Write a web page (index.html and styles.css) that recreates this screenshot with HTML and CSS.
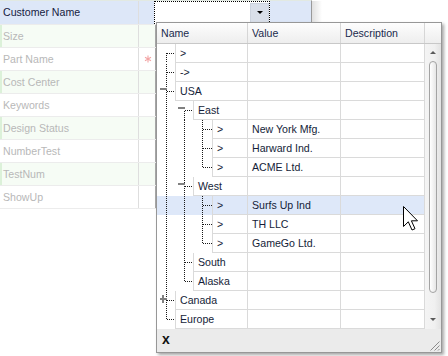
FILE: index.html
```html
<!DOCTYPE html>
<html>
<head>
<meta charset="utf-8">
<link rel="stylesheet" href="styles.css">
</head>
<body>
<div class="pgrid">
  <div class="prow first active">
    <div class="plabel">Customer Name</div>
    <div class="pmark"></div>
    <div class="pvalue"><div class="editor"><span class="ebtn"><span class="earrow"></span></span></div></div>
  </div>
  <div class="prow alt"><div class="plabel">Size</div><div class="pmark"></div><div class="pvalue"></div></div>
  <div class="prow"><div class="plabel">Part Name</div><div class="pmark"><svg class="star" width="8" height="8" viewBox="0 0 8 8"><path d="M4 0.5V7.5M1 2.2L7 5.8M1 5.8L7 2.2"/></svg></div><div class="pvalue"></div></div>
  <div class="prow alt"><div class="plabel">Cost Center</div><div class="pmark"></div><div class="pvalue"></div></div>
  <div class="prow"><div class="plabel">Keywords</div><div class="pmark"></div><div class="pvalue"></div></div>
  <div class="prow alt"><div class="plabel">Design Status</div><div class="pmark"></div><div class="pvalue"></div></div>
  <div class="prow"><div class="plabel">NumberTest</div><div class="pmark"></div><div class="pvalue"></div></div>
  <div class="prow alt"><div class="plabel">TestNum</div><div class="pmark"></div><div class="pvalue"></div></div>
  <div class="prow"><div class="plabel">ShowUp</div><div class="pmark"></div><div class="pvalue"></div></div>
</div>

<div class="popup">
  <div class="ghead">
    <div class="hc c1">Name</div>
    <div class="hc c2">Value</div>
    <div class="hc c3">Description</div>
    <div class="hc c4"></div>
  </div>
  <div class="gbody">
    <div class="rows">
      <div class="trow"><div class="ncol"><svg class="tree" width="18" height="19"><line class="d v" x1="9.5" y1="9" x2="9.5" y2="19"/><line class="d" x1="10" y1="9.5" x2="18" y2="9.5"/></svg><div class="node">&gt;</div></div><div class="vcell"></div><div class="dcell"></div></div>
      <div class="trow"><div class="ncol"><svg class="tree" width="18" height="19"><line class="d v" x1="9.5" y1="0" x2="9.5" y2="19"/><line class="d" x1="10" y1="9.5" x2="18" y2="9.5"/></svg><div class="node">-&gt;</div></div><div class="vcell"></div><div class="dcell"></div></div>
      <div class="trow"><div class="ncol"><svg class="tree" width="18" height="19"><line class="d v" x1="9.5" y1="0" x2="9.5" y2="19"/><line class="d" x1="10" y1="9.5" x2="18" y2="9.5"/><rect class="g" x="3" y="6" width="7" height="2"/></svg><div class="node">USA</div></div><div class="vcell"></div><div class="dcell"></div></div>
      <div class="trow"><div class="ncol"><svg class="tree" width="36" height="19"><line class="d v" x1="9.5" y1="0" x2="9.5" y2="19"/><line class="d v" x1="27.5" y1="9" x2="27.5" y2="19"/><line class="d" x1="28" y1="9.5" x2="36" y2="9.5"/><rect class="g" x="21" y="6" width="7" height="2"/></svg><div class="node">East</div></div><div class="vcell"></div><div class="dcell"></div></div>
      <div class="trow"><div class="ncol"><svg class="tree" width="55" height="19"><line class="d v" x1="9.5" y1="0" x2="9.5" y2="19"/><line class="d v" x1="27.5" y1="0" x2="27.5" y2="19"/><line class="d v" x1="45.5" y1="0" x2="45.5" y2="19"/><line class="d" x1="46" y1="9.5" x2="55" y2="9.5"/></svg><div class="node">&gt;</div></div><div class="vcell">New York Mfg.</div><div class="dcell"></div></div>
      <div class="trow"><div class="ncol"><svg class="tree" width="55" height="19"><line class="d v" x1="9.5" y1="0" x2="9.5" y2="19"/><line class="d v" x1="27.5" y1="0" x2="27.5" y2="19"/><line class="d v" x1="45.5" y1="0" x2="45.5" y2="19"/><line class="d" x1="46" y1="9.5" x2="55" y2="9.5"/></svg><div class="node">&gt;</div></div><div class="vcell">Harward Ind.</div><div class="dcell"></div></div>
      <div class="trow"><div class="ncol"><svg class="tree" width="55" height="19"><line class="d v" x1="9.5" y1="0" x2="9.5" y2="19"/><line class="d v" x1="27.5" y1="0" x2="27.5" y2="19"/><line class="d v" x1="45.5" y1="0" x2="45.5" y2="10"/><line class="d" x1="46" y1="9.5" x2="55" y2="9.5"/></svg><div class="node">&gt;</div></div><div class="vcell">ACME Ltd.</div><div class="dcell"></div></div>
      <div class="trow"><div class="ncol"><svg class="tree" width="36" height="19"><line class="d v" x1="9.5" y1="0" x2="9.5" y2="19"/><line class="d v" x1="27.5" y1="0" x2="27.5" y2="19"/><line class="d" x1="28" y1="9.5" x2="36" y2="9.5"/><rect class="g" x="21" y="6" width="7" height="2"/></svg><div class="node">West</div></div><div class="vcell"></div><div class="dcell"></div></div>
      <div class="trow sel"><div class="ncol"><svg class="tree" width="55" height="19"><line class="d v" x1="9.5" y1="0" x2="9.5" y2="19"/><line class="d v" x1="27.5" y1="0" x2="27.5" y2="19"/><line class="d v" x1="45.5" y1="0" x2="45.5" y2="19"/><line class="d" x1="46" y1="9.5" x2="55" y2="9.5"/></svg><div class="node">&gt;</div></div><div class="vcell">Surfs Up Ind</div><div class="dcell"></div></div>
      <div class="trow"><div class="ncol"><svg class="tree" width="55" height="19"><line class="d v" x1="9.5" y1="0" x2="9.5" y2="19"/><line class="d v" x1="27.5" y1="0" x2="27.5" y2="19"/><line class="d v" x1="45.5" y1="0" x2="45.5" y2="19"/><line class="d" x1="46" y1="9.5" x2="55" y2="9.5"/></svg><div class="node">&gt;</div></div><div class="vcell">TH LLC</div><div class="dcell"></div></div>
      <div class="trow"><div class="ncol"><svg class="tree" width="55" height="19"><line class="d v" x1="9.5" y1="0" x2="9.5" y2="19"/><line class="d v" x1="27.5" y1="0" x2="27.5" y2="19"/><line class="d v" x1="45.5" y1="0" x2="45.5" y2="10"/><line class="d" x1="46" y1="9.5" x2="55" y2="9.5"/></svg><div class="node">&gt;</div></div><div class="vcell">GameGo Ltd.</div><div class="dcell"></div></div>
      <div class="trow"><div class="ncol"><svg class="tree" width="36" height="19"><line class="d v" x1="9.5" y1="0" x2="9.5" y2="19"/><line class="d v" x1="27.5" y1="0" x2="27.5" y2="19"/><line class="d" x1="28" y1="9.5" x2="36" y2="9.5"/></svg><div class="node">South</div></div><div class="vcell"></div><div class="dcell"></div></div>
      <div class="trow"><div class="ncol"><svg class="tree" width="36" height="19"><line class="d v" x1="9.5" y1="0" x2="9.5" y2="19"/><line class="d v" x1="27.5" y1="0" x2="27.5" y2="10"/><line class="d" x1="28" y1="9.5" x2="36" y2="9.5"/></svg><div class="node">Alaska</div></div><div class="vcell"></div><div class="dcell"></div></div>
      <div class="trow"><div class="ncol"><svg class="tree" width="18" height="19"><line class="d v" x1="9.5" y1="0" x2="9.5" y2="19"/><line class="d" x1="10" y1="9.5" x2="18" y2="9.5"/><rect class="g" x="3" y="7" width="7" height="2"/><rect class="g" x="5" y="4" width="2" height="8"/></svg><div class="node">Canada</div></div><div class="vcell"></div><div class="dcell"></div></div>
      <div class="trow"><div class="ncol"><svg class="tree" width="18" height="19"><line class="d v" x1="9.5" y1="0" x2="9.5" y2="10"/><line class="d" x1="10" y1="9.5" x2="18" y2="9.5"/></svg><div class="node">Europe</div></div><div class="vcell"></div><div class="dcell"></div></div>
    </div>
    <div class="vscroll">
      <span class="sarrow up"></span>
      <span class="thumb"></span>
      <span class="sarrow down"></span>
    </div>
  </div>
  <div class="gfoot">
    <span class="close">x</span>
    <svg class="grip" width="11" height="11" viewBox="0 0 11 11"><path d="M10.5 1.5L1.5 10.5M10.5 5.5L5.5 10.5M10.5 9L9 10.5"/></svg>
  </div>
</div>

<svg class="cursor" width="17" height="27" viewBox="0 0 17 27"><path d="M0.5 0.5V20.5L5.3 15.8L9 24L12 22.7L8.4 14.8H14.5Z"/></svg>
</body>
</html>
```

FILE: styles.css
```css
html, body {
  margin: 0;
  padding: 0;
}
body {
  width: 448px;
  height: 356px;
  background: #ffffff;
  font-family: "Liberation Sans", Arial, sans-serif;
  font-size: 10.6px;
  color: #141d38;
  position: relative;
  overflow: hidden;
}
* { box-sizing: border-box; }

/* property grid */
.pgrid {
  width: 312px;
  border-top: 1px solid #e2e9e2;
  border-right: 1px solid #9a9a9a;
  position: relative;
}
.pgrid::after {
  content: "";
  position: absolute;
  top: 0;
  right: -11px;
  width: 10px;
  height: 100%;
  background: linear-gradient(90deg, rgba(0,0,0,0.12), rgba(0,0,0,0));
}
.prow {
  display: flex;
  height: 23px;
  border-bottom: 1px solid #ececec;
}
.prow.first { height: 24px; }
.prow.alt {
  background: #f6fcf5;
  box-shadow: inset 2px 0 0 #dcf1d9;
}
.prow.active { background: #dde7f8; }
.plabel {
  width: 139px;
  padding-left: 3px;
  border-right: 1px solid #dedede;
  line-height: 22px;
  color: #b8b8b8;
  white-space: nowrap;
}
.prow.active .plabel { color: #15213f; line-height: 23px; }
.pmark {
  width: 17px;
  border-right: 1px solid #a9a9a9;
  display: flex;
  align-items: center;
  justify-content: center;
}
.star { margin-top: -1px; margin-left: 1px; }
.star path { stroke: #f3a5a5; stroke-width: 1.1; fill: none; }
.pvalue { flex: 1; }
.editor {
  margin-left: -2px;
  width: 116px;
  height: 23px;
  border: 1px dotted #000;
  border-bottom: none;
  background: #fff;
  display: flex;
  justify-content: flex-end;
}
.ebtn {
  width: 19px;
  height: 20px;
  margin-top: 1px;
  background: #d9dfe9;
  border: 1px solid #ccd3de;
  display: flex;
  justify-content: center;
  padding-top: 7px;
}
.earrow {
  width: 0;
  height: 0;
  border-left: 3px solid transparent;
  border-right: 3px solid transparent;
  border-top: 3px solid #000;
}

/* popup */
.popup {
  position: absolute;
  left: 156px;
  top: 22px;
  width: 286px;
  height: 331px;
  border: 1px solid #979797;
  background: #fff;
  box-shadow: 2px 2px 3px rgba(0,0,0,0.35);
  display: flex;
  flex-direction: column;
}
.ghead {
  display: flex;
  height: 21px;
  border-bottom: 1px solid #c8c8c8;
  background: linear-gradient(#fdfdfd, #eeeeee);
  flex: none;
}
.hc {
  line-height: 20px;
  padding-left: 4px;
  border-right: 1px solid #d6d6d6;
  color: #1a2a4c;
  white-space: nowrap;
}
.c1 { width: 91px; }
.c2 { width: 93px; }
.c3 { width: 84px; }
.c4 { width: 16px; border-right: none; }

.gbody {
  display: flex;
  height: 285px;
  flex: none;
}
.rows { width: 268px; }
.trow {
  display: flex;
  height: 19px;
}
.trow.sel { background: #dee8f9; }
.ncol {
  width: 91px;
  display: flex;
}
.tree { flex: none; display: block; }
.tree .d {
  stroke: #1a1a1a;
  stroke-width: 1;
  stroke-dasharray: 1 1;
  shape-rendering: crispEdges;
}
.trow:nth-child(even) .tree .v { stroke-dashoffset: 1; }
.tree .g { fill: #808080; shape-rendering: crispEdges; }
.node {
  flex: 1;
  border-left: 1px solid #dadada;
  border-right: 1px solid #dadada;
  border-bottom: 1px solid #dadada;
  padding-left: 4px;
  line-height: 18px;
  white-space: nowrap;
}
.vcell {
  width: 93px;
  border-right: 1px solid #dadada;
  border-bottom: 1px solid #dadada;
  padding-left: 4px;
  line-height: 18px;
  white-space: nowrap;
}
.dcell {
  width: 84px;
  border-right: 1px solid #dadada;
  border-bottom: 1px solid #dadada;
}

.vscroll {
  width: 16px;
  background: linear-gradient(90deg, #f4f4f4, #f0f0f0 60%, #e2e2e2);
  display: flex;
  flex-direction: column;
  padding-top: 7px;
  padding-left: 4px;
}
.sarrow {
  width: 0;
  height: 0;
  border-left: 3px solid transparent;
  border-right: 3px solid transparent;
  margin-left: 1px;
}
.sarrow.up { border-bottom: 3px solid #5a5a5a; }
.sarrow.down { border-top: 3px solid #5a5a5a; margin-top: 25px; }
.thumb {
  width: 8px;
  height: 232px;
  margin-top: 7px;
  border: 1px solid #a3a3a3;
  border-radius: 4px;
  background: linear-gradient(90deg, #ffffff, #e6e6e6);
}

.gfoot {
  flex: 1;
  background: #ebebeb;
  display: flex;
  align-items: center;
  justify-content: space-between;
  padding-left: 5px;
  position: relative;
}
.close {
  font-weight: bold;
  font-size: 14px;
  color: #111;
  margin-top: -3px;
}
.grip {
  align-self: flex-end;
  margin-right: 1px;
  margin-bottom: 1px;
}
.grip path { stroke: #8c8c8c; stroke-width: 1; fill: none; }

.cursor {
  position: absolute;
  left: 403px;
  top: 206px;
}
.cursor path {
  fill: #fff;
  stroke: #000;
  stroke-width: 1;
  stroke-linejoin: miter;
}
```
